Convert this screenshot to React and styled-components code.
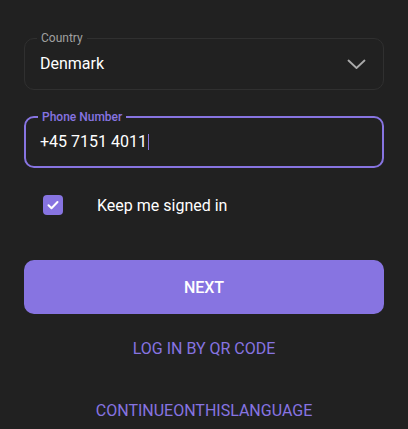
import React from "react";
import styled, { createGlobalStyle } from "styled-components";

const GlobalStyle = createGlobalStyle`
  html, body {
    margin: 0;
    padding: 0;
    background: #212121;
  }
  body {
    font-family: Roboto, "Liberation Sans", sans-serif;
    color: #ffffff;
  }
`;

const Page = styled.div`
  width: 408px;
  height: 429px;
  box-sizing: border-box;
  padding: 38px 24px 0 24px;
  background: #212121;
  overflow: hidden;
`;

const Field = styled.div`
  position: relative;
  height: 52px;
  box-sizing: border-box;
  border: ${(p) => (p.active ? "2px solid #8774e1" : "1px solid #303030")};
  border-radius: 10px;
  display: flex;
  align-items: center;
  justify-content: space-between;
  padding: 0 17px 0 ${(p) => (p.active ? "14px" : "15px")};
  margin-top: ${(p) => p.top || 0}px;
`;

const FieldLabel = styled.span`
  position: absolute;
  top: -8px;
  left: 12px;
  padding: 0 4px;
  background: #212121;
  font-size: 12px;
  line-height: 14px;
  font-weight: ${(p) => (p.active ? 500 : 400)};
  color: ${(p) => (p.active ? "#8774e1" : "#a0a0a0")};
`;

const FieldValue = styled.span`
  font-size: 16px;
  line-height: 20px;
  color: #ffffff;
  display: flex;
  align-items: center;
  margin-top: ${(p) => (p.active ? "-1px" : "0")};
`;

const Caret = styled.span`
  display: inline-block;
  width: 1px;
  height: 16px;
  margin-left: 1px;
  background: #8774e1;
`;

const CheckRow = styled.label`
  display: flex;
  align-items: center;
  margin-top: 27px;
  padding-left: 19px;
  height: 20px;
  font-size: 16px;
  color: #ffffff;
`;

const Box = styled.span`
  width: 20px;
  height: 20px;
  border-radius: 4px;
  background: #8774e1;
  display: flex;
  align-items: center;
  justify-content: center;
  margin-right: 34px;
`;

const NextButton = styled.button`
  display: block;
  width: 100%;
  height: 54px;
  margin-top: 45px;
  border: none;
  border-radius: 10px;
  background: #8774e1;
  color: #ffffff;
  font-family: Roboto, "Liberation Sans", sans-serif;
  font-size: 16px;
  font-weight: 500;
  text-transform: uppercase;
`;

const TextLink = styled.div`
  text-align: center;
  font-size: 16px;
  line-height: 20px;
  color: #8774e1;
  text-transform: uppercase;
  margin-top: ${(p) => p.top}px;
`;

export default function App() {
  return (
    <>
      <GlobalStyle />
      <Page>
        <Field>
          <FieldLabel>Country</FieldLabel>
          <FieldValue>Denmark</FieldValue>
          <svg width="19" height="10" viewBox="0 0 19 10" fill="none">
            <path d="M1.5 1.5l8 7.5 8-7.5" stroke="#aaaaaa" strokeWidth="1.8" strokeLinecap="round" strokeLinejoin="round" />
          </svg>
        </Field>

        <Field active top={26}>
          <FieldLabel active>Phone Number</FieldLabel>
          <FieldValue active>
            +45 7151 4011
            <Caret />
          </FieldValue>
        </Field>

        <CheckRow>
          <Box>
            <svg width="14" height="14" viewBox="0 0 14 14" fill="none">
              <path d="M2.5 7.2l3 3 6-6.2" stroke="#ffffff" strokeWidth="2" strokeLinecap="round" strokeLinejoin="round" />
            </svg>
          </Box>
          Keep me signed in
        </CheckRow>

        <NextButton>Next</NextButton>

        <TextLink top={25}>Log in by QR code</TextLink>
        <TextLink top={42}>continueOnThisLanguage</TextLink>
      </Page>
    </>
  );
}
